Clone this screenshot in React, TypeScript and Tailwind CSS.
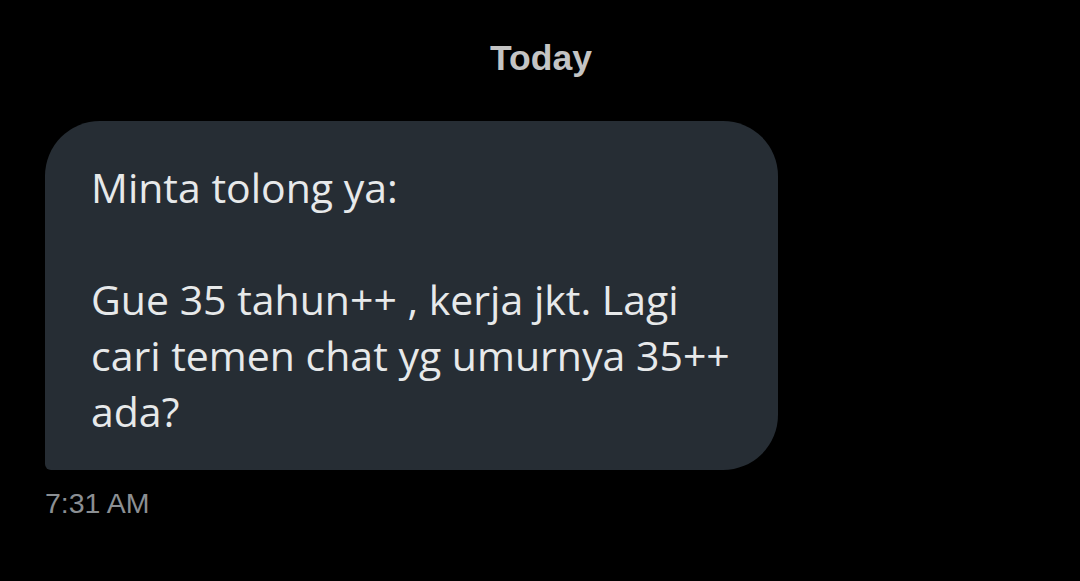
export default function App() {
  return (
    <div className="flex h-[581px] w-[1080px] flex-col bg-black font-['Open_Sans',sans-serif]">
      {/* Day divider */}
      <div className="flex justify-center pt-[36px]">
        <span className="pl-[2px] font-['Liberation_Sans',sans-serif] text-[35.5px] font-bold leading-[44px] text-[#c4c4c4]">
          Today
        </span>
      </div>

      {/* Message */}
      <div className="mt-[41px] pl-[45px]">
        <div className="w-[733px] rounded-[55px] rounded-bl-[6px] bg-[#262d34] pb-[31px] pl-[46px] pr-[30px] pt-[38px] text-[41px] leading-[56px] text-[#e7e9ea]">
          <p>Minta tolong ya:</p>
          <p>&nbsp;</p>
          <p>
            Gue 35 tahun++ , kerja jkt. Lagi
            <br />
            cari temen chat yg umurnya 35++
            <br />
            ada?
          </p>
        </div>
        <p className="mt-[16px] font-['Liberation_Sans',sans-serif] text-[28.5px] leading-[34px] text-[#8b8f93]">
          7:31 AM
        </p>
      </div>
    </div>
  );
}
